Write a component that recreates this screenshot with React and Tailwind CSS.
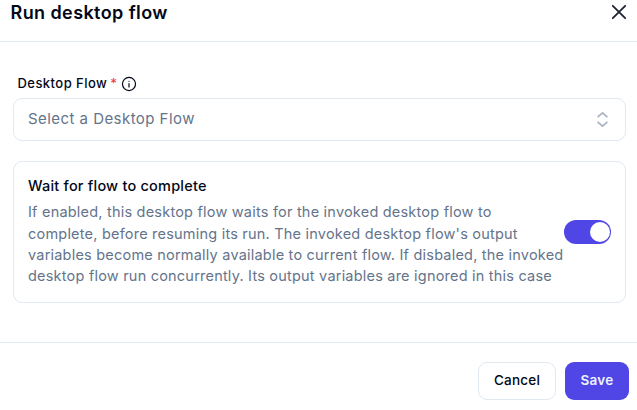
export default function App() {
  return (
    <div className="flex h-[410px] w-[637px] flex-col overflow-hidden bg-white font-['Inter',sans-serif] text-[#020817]">
      <header className="flex h-[42px] shrink-0 items-start justify-between border-b border-[#e2e8f0] pl-[10.5px] pr-2">
        <h1 className="text-[18px] leading-[26px] font-semibold tracking-[0.41px] whitespace-nowrap">Run desktop flow</h1>
        <svg className="mt-[2px] h-5 w-5" viewBox="0 0 20 20" fill="none" stroke="#1e2336" strokeWidth="1.8" strokeLinecap="round"><path d="M3.8 3.8 16.2 16.2M16.2 3.8 3.8 16.2" /></svg>
      </header>
      <main className="h-[300px] shrink-0 pl-[13px] pr-[11px] pt-[32px]">
        <div className="flex h-5 items-center pl-[4.5px] text-[13px] font-medium">
          <span className="tracking-[0.45px]">Desktop Flow</span>
          <span className="ml-[3px] text-[#ef4444]">*</span>
          <svg className="ml-1 h-[16px] w-[16px]" viewBox="0 0 24 24" fill="none" stroke="currentColor" strokeWidth="1.8" strokeLinecap="round"><circle cx="12" cy="12" r="9.8" /><path d="M12 16.5v-5M12 8h.01" /></svg>
        </div>
        <div className="mt-[4px] flex h-[43px] items-center justify-between rounded-[9px] border border-[#e2e8f0] pl-[14px] pr-[13px] text-[#64748b]">
          <span className="text-[15px] tracking-[0.45px]">Select a Desktop Flow</span>
          <svg className="h-[19px] w-[19px]" viewBox="0 0 24 24" fill="none" stroke="#aab3c0" strokeWidth="2.2" strokeLinecap="round" strokeLinejoin="round"><path d="m6.5 15.5 5.5 5 5.5-5M6.5 8.5l5.5-5 5.5 5" /></svg>
        </div>
        <section className="mt-[20px] flex h-[142px] items-center rounded-[9px] border border-[#e2e8f0] pl-[14px] pr-[14px]">
          <div className="-mt-[2px] w-[536px] shrink-0">
            <h2 className="text-[14.5px] leading-5 font-medium tracking-[0.22px]">Wait for flow to complete</h2>
            <p className="mt-[5px] text-[14.5px] leading-[21px] tracking-[0.21px] whitespace-nowrap text-[#64748b]">
              <span className="mb-px block">If enabled, this desktop flow waits for the invoked desktop flow to</span>
              complete, before resuming its run. The invoked desktop flow's output<br />variables become normally available to current flow. If disbaled, the invoked<br />desktop flow run concurrently. Its output variables are ignored in this case
            </p>
          </div>
          <button aria-label="Wait for flow to complete" className="flex h-6 w-[47px] shrink-0 items-center justify-end rounded-full bg-[#4f46e5] pr-[1.5px]"><span className="h-[19.5px] w-[19.5px] rounded-full bg-white" /></button>
        </section>
      </main>
      <footer className="flex flex-1 items-start justify-end gap-[9px] border-t border-[#e2e8f0] pt-[19px] pr-2 text-[13.5px] font-medium tracking-[0.2px]">
        <button className="h-[38px] w-[78px] rounded-[9px] border border-[#e2e8f0] pb-[2px]">Cancel</button>
        <button className="h-[38px] w-[64px] rounded-[9px] bg-[#4f46e5] pb-[2px] font-semibold text-[#eef2ff]">Save</button>
      </footer>
    </div>
  );
}
